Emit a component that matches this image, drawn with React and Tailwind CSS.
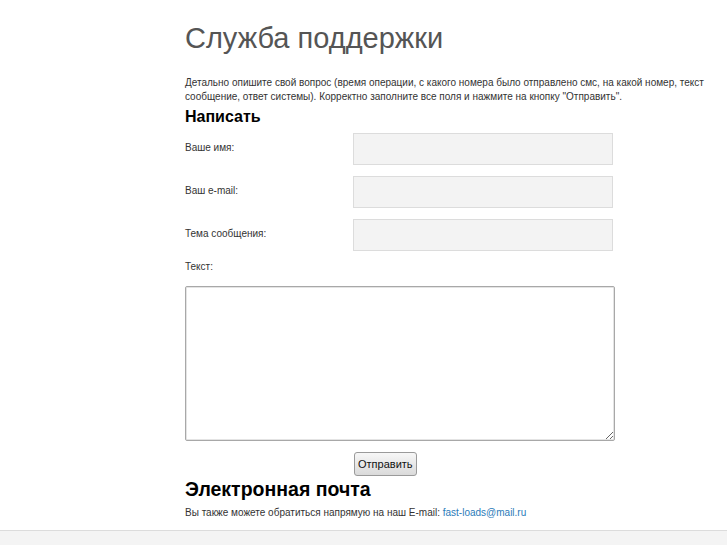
export default function App() {
  const fields = [
    { label: 'Ваше имя:', name: 'name' },
    { label: 'Ваш e-mail:', name: 'email' },
    { label: 'Тема сообщения:', name: 'subject' },
  ];

  return (
    <div className="min-h-[545px] flex flex-col bg-white font-['Liberation_Sans',Arial,sans-serif] text-[#333]">
      <div className="flex-1 pl-[185px] pr-[20px]">
        <h1 className="pt-[19px] text-[29px] leading-[38px] text-[#555] font-normal">Служба поддержки</h1>

        <p className="mt-[19px] text-[10px] leading-[14px] text-[#333]">
          Детально опишите свой вопрос (время операции, с какого номера было отправлено смс, на какой номер, текст
          сообщение, ответ системы). Корректно заполните все поля и нажмите на кнопку "Отправить".
        </p>

        <h2 className="mt-[3px] text-[16px] leading-[20px] font-bold text-black">Написать</h2>

        <form className="w-[430px]" onSubmit={e => e.preventDefault()}>
          <div className="mt-[6px] flex flex-col gap-[11px]">
            {fields.map(f => (
              <div key={f.name} className="flex items-center">
                <label className="w-[168px] mb-[4px] text-[10px] text-[#333]">{f.label}</label>
                <input
                  type="text"
                  name={f.name}
                  className="w-[260px] h-[32px] bg-[#f3f3f3] border border-[#dcdcdc] outline-none"
                />
              </div>
            ))}
          </div>

          <div className="mt-[10px] text-[10px] leading-[12px]">Текст:</div>
          <textarea className="mt-[13px] block w-[430px] h-[155px] border border-[#a8a8a8] rounded-[2px] shadow-[inset_0_0_0_1px_#e4e4e4] outline-none" />

          <div className="mt-[10px] pl-[169px]">
            <button
              type="submit"
              className="h-[24px] px-[3px] text-[11px] text-[#111] border border-[#9a9a9a] rounded-[3px] bg-gradient-to-b from-[#f7f7f7] to-[#dadada]"
            >
              Отправить
            </button>
          </div>
        </form>

        <h2 className="text-[19.5px] leading-[26px] font-bold text-black">Электронная почта</h2>
        <p className="mt-[4px] text-[10px] leading-[14px] text-[#333]">
          Вы также можете обратиться напрямую на наш E-mail:{' '}
          <a href="#" className="text-[#2b7bb9]">fast-loads@mail.ru</a>
        </p>
      </div>

      <div className="mt-[7px] h-[15px] bg-[#f4f4f4] border-t border-[#dcdcdc]" />
    </div>
  );
}
